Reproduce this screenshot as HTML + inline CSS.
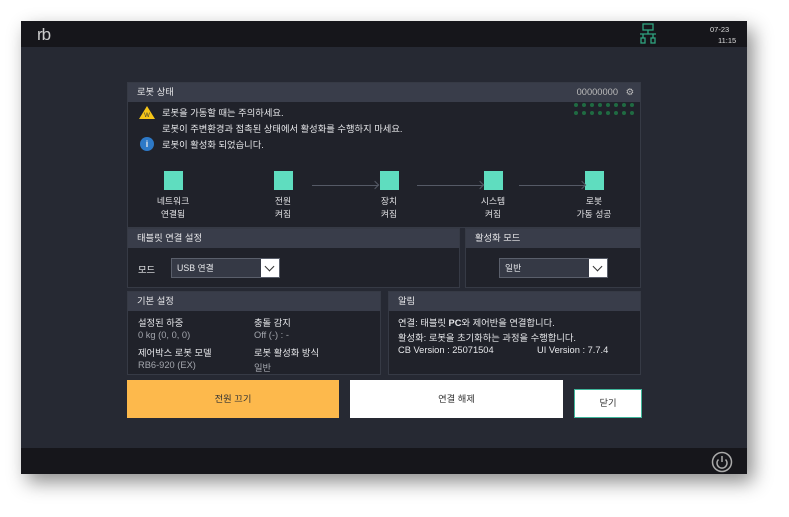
<!DOCTYPE html>
<html><head><meta charset="utf-8"><style>
*{box-sizing:border-box;margin:0;padding:0}
body{width:789px;height:517px;background:#fff;position:relative;overflow:hidden;font-family:"Liberation Sans","Noto Sans CJK KR",sans-serif;font-size:9.3px;color:#e6e7ea}
.win{position:absolute;left:21px;top:21px;width:726px;height:453px;background:#262933;box-shadow:6px 8px 18px rgba(0,0,0,.45)}
.top{position:absolute;left:0;top:0;width:726px;height:26px;background:#16161b}
.bot{position:absolute;left:0;top:427px;width:726px;height:26px;background:#16161b}
.p{position:absolute;background:#20222a;border:1px solid #363a45}
.h{height:19px;background:#393d4a;padding-left:9px;line-height:19px;font-size:9.3px;color:#e8e8ea}
.a{position:absolute;white-space:nowrap}
.sq{position:absolute;width:19px;height:19px;background:#5fddbf}
.lbl{position:absolute;width:80px;text-align:center;font-size:8.8px;line-height:13px;color:#e0e0e3}
.arr{position:absolute;height:1px;background:#555a66;width:66px}
.arr:after{content:"";position:absolute;right:0;top:-3px;width:5px;height:5px;border-top:1px solid #555a66;border-right:1px solid #555a66;transform:rotate(45deg)}
.sel{position:absolute;height:20px;border:1px solid #5a5f6b;background:#353945;font-size:8.8px;line-height:18px;padding-left:5px}
.sel b{position:absolute;right:0;top:0;width:18px;height:18px;background:#fff}
.sel b:after{content:"";position:absolute;left:5px;top:4px;width:6px;height:6px;border-right:1.5px solid #333;border-bottom:1.5px solid #333;transform:rotate(45deg)}
.g{color:#a3a6ad}
</style></head><body>
<div class="win">
<div class="top">
<div class="a" style="left:16px;top:4px;font-size:17px;color:#ccc;letter-spacing:-1px">rb</div>
<svg class="a" style="left:617px;top:2px" width="20" height="24" viewBox="0 0 20 24" fill="none" stroke="#2fa37f" stroke-width="1.3"><rect x="5" y="1" width="10" height="6"/><path d="M10 7v4M2 11h16M5 11v4M15 11v4"/><rect x="3" y="15" width="4" height="5"/><rect x="13" y="15" width="4" height="5"/></svg>
<div class="a" style="left:689px;top:4px;font-size:7.5px;color:#ddd">07-23</div>
<div class="a" style="left:697px;top:15px;font-size:7.5px;color:#ddd">11:15</div>
</div>

<div class="p" style="left:106px;top:61px;width:514px;height:146px">
<div class="h">로봇 상태<span style="position:absolute;right:22px;color:#bbb">00000000</span><span style="position:absolute;right:6px;color:#bbb">⚙</span></div>
<svg class="a" style="left:445px;top:19px" width="66" height="14"><g fill="#1f6b42"><circle cx="3" cy="3" r="2"/><circle cx="11" cy="3" r="2"/><circle cx="19" cy="3" r="2"/><circle cx="27" cy="3" r="2"/><circle cx="35" cy="3" r="2"/><circle cx="43" cy="3" r="2"/><circle cx="51" cy="3" r="2"/><circle cx="59" cy="3" r="2"/><circle cx="3" cy="11" r="2"/><circle cx="11" cy="11" r="2"/><circle cx="19" cy="11" r="2"/><circle cx="27" cy="11" r="2"/><circle cx="35" cy="11" r="2"/><circle cx="43" cy="11" r="2"/><circle cx="51" cy="11" r="2"/><circle cx="59" cy="11" r="2"/></g></svg>
<svg class="a" style="left:11px;top:23px" width="16" height="13"><path d="M8 0L16 13H0Z" fill="#f5c518"/><text x="8" y="11" font-size="6" fill="#333" text-anchor="middle" font-family="Liberation Sans">W</text></svg>
<div class="a" style="left:34px;top:22px">로봇을 가동할 때는 주의하세요.</div>
<div class="a" style="left:34px;top:38px">로봇이 주변환경과 접촉된 상태에서 활성화를 수행하지 마세요.</div>
<div class="a" style="left:12px;top:54px;width:14px;height:14px;border-radius:50%;background:#2d79c7;text-align:center;line-height:14px;font-weight:bold;font-size:9px">i</div>
<div class="a" style="left:34px;top:54px">로봇이 활성화 되었습니다.</div>
<div class="sq" style="left:36px;top:88px"></div>
<div class="sq" style="left:146px;top:88px"></div>
<div class="sq" style="left:252px;top:88px"></div>
<div class="sq" style="left:356px;top:88px"></div>
<div class="sq" style="left:457px;top:88px"></div>
<div class="arr" style="left:184px;top:102px"></div>
<div class="arr" style="left:289px;top:102px"></div>
<div class="arr" style="left:391px;top:102px"></div>
<div class="lbl" style="left:5px;top:112px">네트워크<br>연결됨</div>
<div class="lbl" style="left:115px;top:112px">전원<br>켜짐</div>
<div class="lbl" style="left:221px;top:112px">장치<br>켜짐</div>
<div class="lbl" style="left:325px;top:112px">시스템<br>켜짐</div>
<div class="lbl" style="left:426px;top:112px">로봇<br>가동 성공</div>
</div>

<div class="p" style="left:106px;top:207px;width:333px;height:60px">
<div class="h">태블릿 연결 설정</div>
<div class="a" style="left:10px;top:33px">모드</div>
<div class="sel" style="left:43px;top:29px;width:109px">USB 연결<b></b></div>
</div>
<div class="p" style="left:444px;top:207px;width:176px;height:60px">
<div class="h">활성화 모드</div>
<div class="sel" style="left:33px;top:29px;width:109px">일반<b></b></div>
</div>

<div class="p" style="left:106px;top:270px;width:254px;height:84px">
<div class="h">기본 설정</div>
<div class="a" style="left:10px;top:23px">설정된 하중</div>
<div class="a g" style="left:10px;top:38px">0 kg (0, 0, 0)</div>
<div class="a" style="left:10px;top:53px">제어박스 로봇 모델</div>
<div class="a g" style="left:10px;top:68px">RB6-920 (EX)</div>
<div class="a" style="left:126px;top:23px">충돌 감지</div>
<div class="a g" style="left:126px;top:38px">Off (-) : -</div>
<div class="a" style="left:126px;top:53px">로봇 활성화 방식</div>
<div class="a g" style="left:126px;top:68px">일반</div>
</div>
<div class="p" style="left:367px;top:270px;width:253px;height:84px">
<div class="h">알림</div>
<div class="a" style="left:9px;top:23px">연결: 태블릿 <b>PC</b>와 제어반을 연결합니다.</div>
<div class="a" style="left:9px;top:38px">활성화: 로봇을 초기화하는 과정을 수행합니다.</div>
<div class="a" style="left:9px;top:53px">CB Version : 25071504</div>
<div class="a" style="left:148px;top:53px">UI Version : 7.7.4</div>
</div>

<div class="a" style="left:106px;top:359px;width:212px;height:38px;background:#fdb94c;color:#333;text-align:center;line-height:38px">전원 끄기</div>
<div class="a" style="left:329px;top:359px;width:213px;height:38px;background:#fff;color:#333;text-align:center;line-height:38px">연결 해제</div>
<div class="a" style="left:553px;top:368px;width:68px;height:29px;background:#fff;border:1.5px solid #3fb59a;color:#333;text-align:center;line-height:26px">닫기</div>

<div class="bot">
<svg class="a" style="left:690px;top:3px" width="22" height="22" viewBox="0 0 22 22" fill="none" stroke="#aaa" stroke-width="1.5"><circle cx="11" cy="11" r="9.5"/><path d="M7.5 8.5a5 5 0 1 0 7 0M11 5v6"/></svg>
</div>
</div>
</body></html>
